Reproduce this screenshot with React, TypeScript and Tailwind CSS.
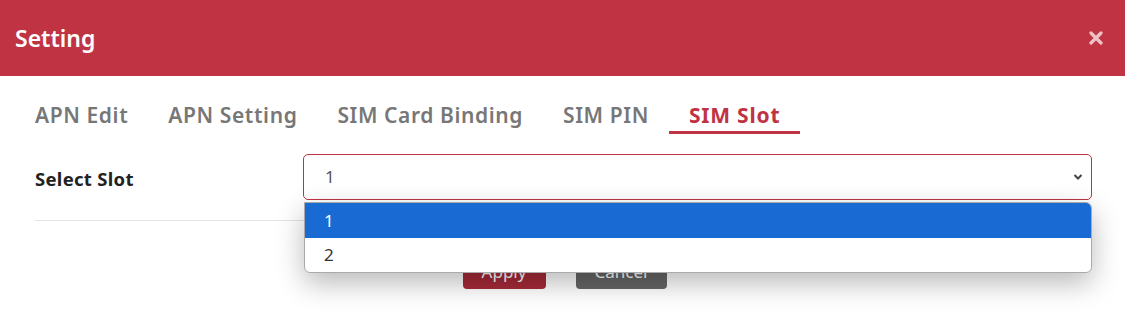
import { useState } from 'react'

const tabs = ['APN Edit', 'APN Setting', 'SIM Card Binding', 'SIM PIN', 'SIM Slot']

export default function App() {
  const [active, setActive] = useState('SIM Slot')
  const [slot, setSlot] = useState('1')

  return (
    <div className="w-[1125px] h-[323px] bg-white overflow-hidden font-['Noto_Sans','Open_Sans',sans-serif]">
      {/* Cabeçalho */}
      <div className="h-[76px] bg-[#c03343] flex items-center justify-between pl-[15px] pr-[22px]">
        <h1 className="text-[23px] font-semibold text-white">Setting</h1>
        <button type="button" className="text-white/70 leading-none" aria-label="Close">
          <svg width="14" height="14" viewBox="0 0 14 14" aria-hidden="true">
            <path d="M2 2L12 12M12 2L2 12" stroke="currentColor" strokeWidth="3.2" strokeLinecap="round" />
          </svg>
        </button>
      </div>

      {/* Abas */}
      <div className="flex pl-[15px] mt-[25px]">
        {tabs.map((t) => (
          <button
            key={t}
            type="button"
            onClick={() => setActive(t)}
            className={
              t === active
                ? 'px-[20px] pb-[2px] border-b-[3px] border-[#c03343] text-[#c03343] text-[21px] tracking-[0.8px] leading-[28px] font-bold'
                : 'px-[20px] pb-[2px] border-b-[3px] border-transparent text-[#777] text-[21px] tracking-[0.6px] leading-[28px] font-semibold'
            }
          >
            {t}
          </button>
        ))}
      </div>

      {/* Formulário */}
      <div className="ml-[35px] mr-[33px] mt-[20px]">
        <div className="grid grid-cols-[268px_1fr] items-center pb-[20px] border-b border-[#e3e3e3]">
          <label className="text-[18.5px] font-bold tracking-[0.3px] text-[#222] pt-[4px]">Select Slot</label>
          <div className="relative">
            <div className="h-[46px] rounded-[5px] border border-[#c03343] bg-white flex items-center justify-between pl-[21px] pr-[8px]">
              <span className="text-[17px] text-[#555]">{slot}</span>
              <svg width="10" height="8" viewBox="0 0 10 8" aria-hidden="true">
                <path d="M1.5 2L5 5.5L8.5 2" stroke="#444" strokeWidth="2" fill="none" />
              </svg>
            </div>
            {/* Lista aberta */}
            <div className="absolute left-[1px] right-0 top-[48px] z-10 bg-white border border-[#aaa] rounded-b-[6px] rounded-tr-[6px] overflow-hidden shadow-[0_10px_28px_rgba(0,0,0,0.28)]">
              {['1', '2'].map((o) => (
                <div
                  key={o}
                  onClick={() => setSlot(o)}
                  className={
                    o === '1'
                      ? 'h-[35px] flex items-center pl-[19px] bg-[#1a6ad4] text-white text-[17px]'
                      : 'h-[34px] flex items-center pl-[19px] text-[#333] text-[17px]'
                  }
                >
                  {o}
                </div>
              ))}
            </div>
          </div>
        </div>

        <div className="flex justify-center gap-[30px] mt-[34px] pl-[2px]">
          <button type="button" className="h-[34px] w-[83px] rounded-[4px] bg-[#a52a38] text-white text-[17px]">
            Apply
          </button>
          <button type="button" className="h-[34px] w-[91px] rounded-[4px] bg-[#666] text-white text-[17px]">
            Cancel
          </button>
        </div>
      </div>
    </div>
  )
}
